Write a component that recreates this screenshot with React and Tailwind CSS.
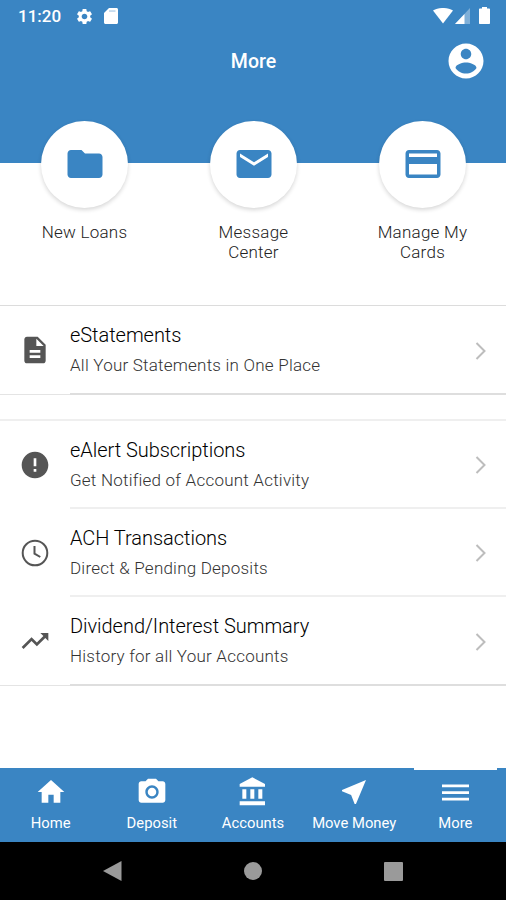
import React from "react";
import {
  MdSettings,
  MdFolder,
  MdEmail,
  MdError,
  MdTrendingUp,
  MdCameraAlt,
  MdHome,
  MdDescription,
} from "react-icons/md";

const Glyph = ({ size, children }) => (
  <svg width={size} height={size} viewBox="0 0 24 24" fill="currentColor">
    {children}
  </svg>
);

const StatusBar = () => (
  <div className="flex h-8 items-center justify-between pl-[18px] pr-4 text-white">
    <div className="flex items-center">
      <span className="w-[58px] text-[17px] font-medium leading-8">11:20</span>
      <MdSettings size={19} className="-ml-px" />
      <svg width="14" height="16" viewBox="0 0 14 16" className="ml-[10px]" fill="currentColor">
        <path d="M5 0h7.5C13.3 0 14 .7 14 1.500v13c0 .8-.7 1.500-1.500 1.500h-11C.7 16 0 15.300 0 14.500V5z" />
        <path d="M5 2.300h6.500v1.500H5z" fill="#3a85c3" opacity=".35" />
      </svg>
    </div>
    <div className="flex items-center">
      <svg width="20" height="16" viewBox="0 0 20 16" fill="currentColor">
        <path d="M0 2.600C5.500-.9 14.500-.9 20 2.600L10 15.500z" />
      </svg>
      <svg width="15" height="16" viewBox="0 0 15 16" className="ml-[2px]" fill="currentColor">
        <path d="M15 0v16H0z" opacity=".35" />
        <path d="M9.500 6v10H0z" />
      </svg>
      <svg width="11" height="17" viewBox="0 0 11 17" className="-mt-px ml-[9px]" fill="currentColor">
        <path d="M3 0h5v1.500h2c.6 0 1 .4 1 1V16c0 .6-.4 1-1 1H1c-.6 0-1-.4-1-1V2.500c0-.6.4-1 1-1h2z" />
      </svg>
    </div>
  </div>
);

const shortcuts = [
  { label: "New Loans", icon: <MdFolder size={42} /> },
  { label: "Message Center", icon: <MdEmail size={42} /> },
  {
    label: "Manage My Cards",
    icon: (
      <Glyph size={42}>
        <path d="M20 4H4c-1.110 0-1.990.890-1.990 2L2 18c0 1.110.890 2 2 2h16c1.110 0 2-.890 2-2V6c0-1.110-.890-2-2-2zm0 14H4v-6h16v6zm0-10H4V6h16v2z" />
      </Glyph>
    ),
  },
];

const sections = [
  [
    {
      title: "eStatements",
      text: "All Your Statements in One Place",
      icon: <MdDescription size={32} />,
    },
  ],
  [
    {
      title: "eAlert Subscriptions",
      text: "Get Notified of Account Activity",
      icon: <MdError size={32} />,
    },
    {
      title: "ACH Transactions",
      text: "Direct & Pending Deposits",
      icon: (
        <svg width="28" height="28" viewBox="0 0 28 28" fill="none" stroke="currentColor" strokeWidth="2">
          <circle cx="14" cy="14" r="12.300" />
          <path d="M13.500 7v7.600l5.800 3.400" />
        </svg>
      ),
    },
    {
      title: "Dividend/Interest Summary",
      text: "History for all Your Accounts",
      icon: <MdTrendingUp size={32} />,
    },
  ],
];

const tabs = [
  { name: "Home", icon: <MdHome size={32} /> },
  { name: "Deposit", icon: <MdCameraAlt size={32} /> },
  {
    name: "Accounts",
    icon: (
      <Glyph size={32}>
        <path d="M4 10v7h3v-7H4zm6 0v7h3v-7h-3zM2 22h19v-3H2v3zm14-12v7h3v-7h-3zm-4.500-9L2 6v2h19V6l-9.500-5z" />
      </Glyph>
    ),
  },
  {
    name: "Move Money",
    icon: (
      <Glyph size={32}>
        <path d="M21 3L3 10.530v.980l6.840 2.650L12.480 21h.980L21 3z" />
      </Glyph>
    ),
  },
  {
    name: "More",
    active: true,
    icon: (
      <svg width="27" height="17" viewBox="0 0 27 17" fill="currentColor">
        <path d="M0 .5h27v2.700H0zM0 7.200h27v2.700H0zM0 13.800h27v2.700H0z" />
      </svg>
    ),
  },
];

const Row = ({ item, last }) => (
  <div className={`flex ${last ? "h-[89px]" : "h-[88px]"}`}>
    <div className="flex h-[88px] w-[70px] shrink-0 items-center justify-center text-[#555]">{item.icon}</div>
    <div className={`flex flex-1 items-center border-b-2 ${last ? "border-[#dedede]" : "border-[#efefef]"}`}>
      <div className="flex-1 whitespace-nowrap pt-0.5 font-light">
        <div className="text-[20px] leading-[30px] tracking-[-0.04px] text-black">{item.title}</div>
        <div className="text-[17px] leading-[31px] tracking-[0.22px] text-[#333]">{item.text}</div>
      </div>
      <svg width="12" height="18" viewBox="0 0 12 18" className="mr-[19px] mt-0.5" fill="none" stroke="#bdbdbd" strokeWidth="2">
        <path d="M1.500 1l8 8-8 8" />
      </svg>
    </div>
  </div>
);

const App = () => {
  return (
    <div className="flex h-[900px] w-[506px] flex-col overflow-hidden bg-white font-['Roboto',sans-serif]">
      {/* Header */}
      <div className="h-[163px] shrink-0 bg-[#3a85c3]">
        <StatusBar />
        <div className="grid h-[58px] grid-cols-3 items-center text-white">
          <span />
          <span className="pl-px pt-px text-center text-[19.5px] font-medium">More</span>
          <span className="flex justify-end pb-px pr-[19px]">
            <Glyph size={42}>
              <path d="M12 2C6.480 2 2 6.480 2 12s4.480 10 10 10 10-4.480 10-10S17.520 2 12 2zm0 3c1.660 0 3 1.340 3 3s-1.340 3-3 3-3-1.340-3-3 1.340-3 3-3zm0 14.200c-2.500 0-4.710-1.280-6-3.220.030-1.990 4-3.080 6-3.080 1.990 0 5.970 1.090 6 3.080-1.290 1.940-3.500 3.220-6 3.220z" />
            </Glyph>
          </span>
        </div>
      </div>

      {/* Shortcuts */}
      <div className="-mr-px -mt-[43px] grid h-[185px] shrink-0 grid-cols-3 pt-px">
        {shortcuts.map((s) => (
          <div key={s.label} className="flex flex-col items-center">
            <div className="flex size-[87px] items-center justify-center rounded-full bg-white pb-px text-[#3a85c3] shadow-[0_2px_4px_rgba(0,0,0,0.16)]">
              {s.icon}
            </div>
            <div className="mt-[14px] w-[100px] text-center text-[17px] font-light leading-5 tracking-[0.25px] text-[#222]">
              {s.label}
            </div>
          </div>
        ))}
      </div>

      {/* Menu list */}
      <div className="flex flex-1 flex-col gap-6">
        {sections.map((rows, i) => (
          <div key={i} className={`relative ${i === 0 ? "border-t border-[#dcdcdc]" : "border-t-2 border-[#efefef]"}`}>
            {rows.map((item, j) => (
              <Row key={item.title} item={item} last={j === rows.length - 1} />
            ))}
            <div className="absolute bottom-0 left-0 h-px w-[70px] bg-[#e4e4e4]" />
          </div>
        ))}
      </div>

      {/* Tabs */}
      <div className="grid h-[74px] shrink-0 grid-cols-5 bg-[#3a85c3] text-white">
        {tabs.map((tab) => (
          <div key={tab.name} className="relative flex flex-col items-center">
            {tab.active && <div className="absolute top-0 h-[2px] w-[83px] bg-white" />}
            <div className="mt-2 flex h-8 items-center">{tab.icon}</div>
            <span className="mt-[5px] whitespace-nowrap text-[14.8px] leading-5">{tab.name}</span>
          </div>
        ))}
      </div>

      {/* Android navigation */}
      <div className="flex h-[58px] shrink-0 items-center justify-between bg-black pl-[102px] pr-[103px] text-[#9a9a9a]">
        <svg width="20" height="20" viewBox="0 0 20 20" fill="currentColor">
          <path d="M19.500 0v20L1 10z" />
        </svg>
        <div className="size-[18px] rounded-full bg-[#9a9a9a]" />
        <div className="size-[19px] rounded-[1px] bg-[#9a9a9a]" />
      </div>
    </div>
  );
};

export default App;
